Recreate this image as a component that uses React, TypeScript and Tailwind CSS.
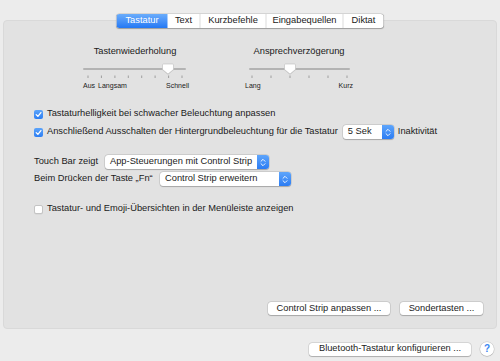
import React from "react";

const font = { fontFamily: '"Liberation Sans", Arial, Helvetica, sans-serif' };

function Thumb({ cx }: { cx: number }) {
  return (
    <g transform={`translate(${cx - 6},3.5)`}>
      <path d="M1.5 0.5 H10.5 Q11.5 0.5 11.5 1.5 V6 L6 10.5 L0.5 6 V1.5 Q0.5 0.5 1.5 0.5 Z" fill="#000" opacity="0.12" transform="translate(0,0.8)" />
      <path d="M1.5 0.5 H10.5 Q11.5 0.5 11.5 1.5 V6 L6 10.5 L0.5 6 V1.5 Q0.5 0.5 1.5 0.5 Z" fill="#fff" stroke="#bdbdbd" strokeWidth="0.6" />
    </g>
  );
}

function SliderSvg({ width, x1, x2, ticks, thumb }: { width: number; x1: number; x2: number; ticks: number[]; thumb: number }) {
  return (
    <svg width={width} height={20} className="block">
      <line x1={x1} y1={9} x2={x2} y2={9} stroke="#b3b3b3" strokeWidth={2} strokeLinecap="round" />
      {ticks.map((t, i) => (
        <rect key={i} x={t - 0.5} y={15.5} width={1} height={2.5} fill="#9e9e9e" />
      ))}
      <Thumb cx={thumb} />
    </svg>
  );
}

function Checkbox({ checked }: { checked: boolean }) {
  if (checked) {
    return (
      <div className="w-[9px] h-[9px] rounded-[2px] bg-gradient-to-b from-[#5ca4fa] to-[#2b7df3] flex items-center justify-center shrink-0">
        <svg width="9" height="9" viewBox="0 0 9 9">
          <path d="M2.2 4.6 L3.9 6.3 L6.9 2.6" fill="none" stroke="#fff" strokeWidth="1.3" strokeLinecap="round" strokeLinejoin="round" />
        </svg>
      </div>
    );
  }
  return <div className="w-[9px] h-[9px] rounded-[2px] bg-white border border-[#c4c4c4] shrink-0 shadow-[0_0.5px_0.5px_rgba(0,0,0,0.08)]" />;
}

function Stepper() {
  return (
    <div className="w-[12px] h-full rounded-r-[3px] bg-gradient-to-b from-[#5ea5fb] to-[#2b7cf3] flex items-center justify-center">
      <svg width="6" height="9" viewBox="0 0 6 9">
        <path d="M1 3.3 L3 1.3 L5 3.3" fill="none" stroke="#fff" strokeWidth="0.9" strokeLinecap="round" strokeLinejoin="round" />
        <path d="M1 5.7 L3 7.7 L5 5.7" fill="none" stroke="#fff" strokeWidth="0.9" strokeLinecap="round" strokeLinejoin="round" />
      </svg>
    </div>
  );
}

function Popup({ text, width }: { text: string; width: string }) {
  return (
    <div className={`${width} h-[14px] shrink-0 bg-white rounded-[3px] shadow-[0_0_0_0.5px_rgba(0,0,0,0.15),0_0.5px_1px_rgba(0,0,0,0.2)] flex items-stretch`}>
      <div className="flex-1 flex items-center pl-[5px] text-[9.3px] leading-none text-[#222]">{text}</div>
      <Stepper />
    </div>
  );
}

function Btn({ text, width }: { text: string; width: string }) {
  return (
    <div className={`${width} h-[13px] bg-white rounded-[3px] shadow-[0_0_0_0.5px_rgba(0,0,0,0.15),0_0.5px_1px_rgba(0,0,0,0.2)] flex items-center justify-center text-[9.3px] leading-none text-[#222]`}>
      {text}
    </div>
  );
}

const tabs = [
  { t: "Tastatur", w: "w-[51px]", sel: true },
  { t: "Text", w: "w-[32px]" },
  { t: "Kurzbefehle", w: "w-[66px]" },
  { t: "Eingabequellen", w: "w-[77px]" },
  { t: "Diktat", w: "w-[41px]" },
];

export default function App() {
  return (
    <div style={font} className="w-[500px] h-[361px] bg-[#ececec] flex flex-col pt-[20px] px-[3px] text-[#1a1a1a] overflow-hidden">
      <div className="relative h-[309px] bg-[#e2e2e2] rounded-[4px] border border-[#d9d9d9] flex flex-col">
        {/* tab bar overlays the panel edge */}
        <div className="absolute left-1/2 -translate-x-1/2 top-[-7px] h-[14px] flex bg-white rounded-[3px] shadow-[0_0_0_0.5px_rgba(0,0,0,0.15),0_0.5px_1px_rgba(0,0,0,0.25)] overflow-hidden">
          {tabs.map((tb, i) => (
            <div
              key={tb.t}
              className={`${tb.w} h-full flex items-center justify-center text-[9.3px] leading-none ${
                tb.sel ? "bg-gradient-to-b from-[#6aacfb] to-[#2378f4] text-white" : "text-[#1a1a1a]"
              } ${i > 1 ? "border-l border-[#dcdcdc]" : ""}`}
            >
              {tb.t}
            </div>
          ))}
        </div>

        {/* sliders */}
        <div className="flex pl-[78px] pt-[25px]">
          <div className="w-[106px] flex flex-col">
            <div className="text-[9.3px] leading-[11px] text-center">Tastenwiederholung</div>
            <div className="mt-[3px]">
              <SliderSvg width={106} x1={2} x2={103} ticks={[6, 19.4, 32.9, 46.3, 59.7, 73.1, 86.6, 100]} thumb={86} />
            </div>
            <div className="flex h-[10px] items-center text-[7px] leading-none">
              <span className="ml-[1px]">Aus</span>
              <span className="ml-[3px]">Langsam</span>
              <span className="ml-auto mr-[-1px]">Schnell</span>
            </div>
          </div>
          <div className="w-[110px] ml-[56px] flex flex-col">
            <div className="text-[9.3px] leading-[11px] text-center">Ansprechverzögerung</div>
            <div className="mt-[3px]">
              <SliderSvg width={110} x1={6} x2={105} ticks={[8, 27, 46, 65, 84, 103]} thumb={46} />
            </div>
            <div className="flex h-[10px] items-center justify-between text-[7px] leading-none">
              <span className="ml-[1px]">Lang</span>
              <span className="mr-[1px]">Kurz</span>
            </div>
          </div>
        </div>

        {/* checkboxes */}
        <div className="flex flex-col pl-[30px] mt-[15px] text-[9.3px] leading-none">
          <div className="h-[18px] flex items-center gap-[4px]">
            <Checkbox checked />
            <span>Tastaturhelligkeit bei schwacher Beleuchtung anpassen</span>
          </div>
          <div className="h-[18px] flex items-center">
            <Checkbox checked />
            <span className="ml-[4px]">Anschließend Ausschalten der Hintergrundbeleuchtung für die Tastatur</span>
            <div className="ml-[5px]">
              <Popup text="5 Sek" width="w-[51px]" />
            </div>
            <span className="ml-[4px]">Inaktivität</span>
          </div>
        </div>

        {/* touch bar */}
        <div className="flex flex-col pl-[30px] mt-[14px] gap-[3px] text-[9.3px] leading-none">
          <div className="flex items-center h-[14px]">
            <span className="w-[71px] shrink-0">Touch Bar zeigt</span>
            <Popup text="App-Steuerungen mit Control Strip" width="w-[164px]" />
          </div>
          <div className="flex items-center h-[14px]">
            <span className="w-[126px] shrink-0">Beim Drücken der Taste „Fn“</span>
            <Popup text="Control Strip erweitern" width="w-[131px]" />
          </div>
        </div>

        <div className="pl-[30px] mt-[14px] h-[18px] flex items-center gap-[4px] text-[9.3px] leading-none">
          <Checkbox checked={false} />
          <span>Tastatur- und Emoji-Übersichten in der Menüleiste anzeigen</span>
        </div>

        <div className="mt-auto mb-[13px] pr-[13px] flex justify-end gap-[10px]">
          <Btn text="Control Strip anpassen ..." width="w-[122px]" />
          <Btn text="Sondertasten ..." width="w-[83px]" />
        </div>
      </div>

      <div className="mt-[13px] pr-[3px] flex justify-end items-center gap-[9px]">
        <Btn text="Bluetooth-Tastatur konfigurieren ..." width="w-[162px]" />
        <div className="w-[14px] h-[14px] rounded-full bg-white shadow-[0_0_0_0.5px_rgba(0,0,0,0.15),0_0.5px_1px_rgba(0,0,0,0.2)] flex items-center justify-center text-[10px] font-bold leading-none text-[#3b86f2]">
          ?
        </div>
      </div>
    </div>
  );
}
